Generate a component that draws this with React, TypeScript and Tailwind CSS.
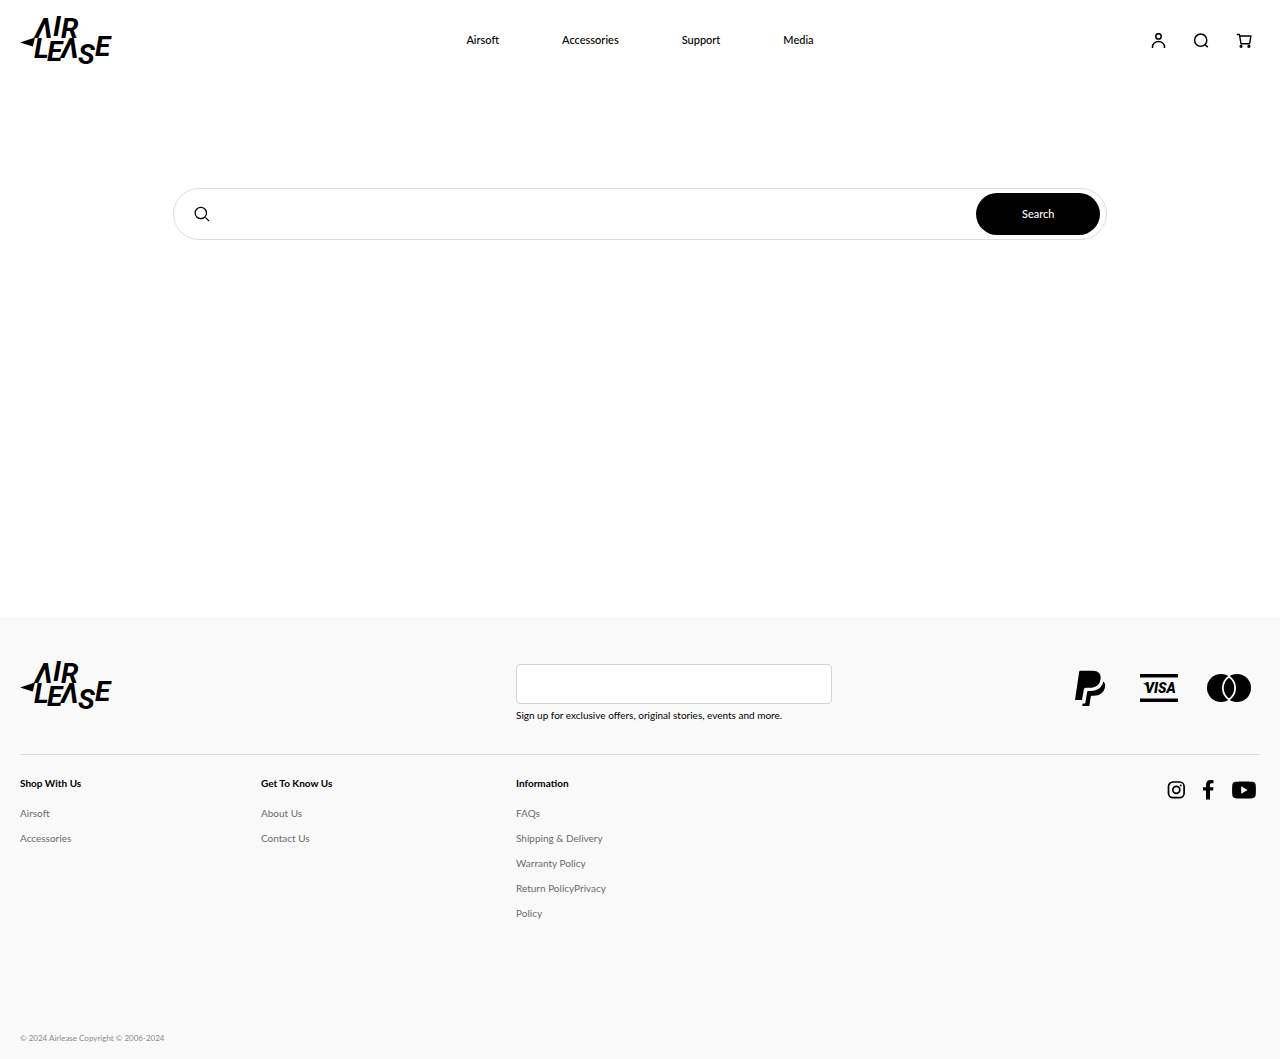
import React from "react";

const navLinks = ["Airsoft", "Accessories", "Support", "Media"];

const footerColumns = [
  { title: "Shop With Us", links: ["Airsoft", "Accessories"] },
  { title: "Get To Know Us", links: ["About Us", "Contact Us"] },
  {
    title: "Information",
    links: [
      "FAQs",
      "Shipping & Delivery",
      "Warranty Policy",
      "Return PolicyPrivacy",
      "Policy",
    ],
  },
];

function Logo() {
  return (
    <a href="#" aria-label="Airlease" className="block w-24">
      <svg
        width="96"
        height="52"
        viewBox="0 0 96 52"
        className="block overflow-visible font-['Roboto',sans-serif] text-[28px] font-bold italic"
      >
        <path d="M0 27.500 15 22.500 12.800 31.500Z" />
        <text x="15 33 41 14 27 41 58 75" y="23 21 23 43 46 43 49 41">
          ΛIRLEΛSE
        </text>
      </svg>
    </a>
  );
}

function UserIcon() {
  return (
    <svg width="16" height="16" viewBox="0 0 16 16" fill="none" stroke="#000" strokeWidth="1.5">
      <circle cx="8.500" cy="3.400" r="2.700" />
      <path d="M2.500 15V14a6 5.600 0 0 1 12 0v1" />
    </svg>
  );
}

function SearchIcon() {
  return (
    <svg width="16" height="16" viewBox="0 0 16 16" fill="none" stroke="#000" strokeWidth="1.5">
      <circle cx="7.700" cy="7.200" r="6.100" />
      <path d="m12 11.500 2.800 2.800" />
    </svg>
  );
}

function CartIcon() {
  return (
    <svg width="16" height="16" viewBox="0 0 16 16" fill="none" stroke="#000" strokeWidth="1.4">
      <path d="M.800 1.500h2.600l1.600 9.200h8.600l1.300-7.700H3.700" />
      <circle cx="5" cy="13.300" r="0.900" />
      <circle cx="12.900" cy="13.300" r="0.900" />
    </svg>
  );
}

function PaypalIcon() {
  return (
    <svg width="32" height="36" viewBox="0 0 32 36">
      <path d="M5.200 .8H18c5 0 8.200 3 7.600 8.200-.8 6-5 8.800-11 8.800H11c-1.200 0-2 .7-2.200 1.900L7 30H0L4.200 1.800C4.300 1.200 4.700 .8 5.200 .8Z" />
      <path d="M28.300 11.500c2 1.600 2.200 3.600 1.600 6-1.200 5.400-5.200 8.200-11 8.200h-1.500c-1 0-1.500.5-1.700 1.400L14.400 36H7.200l.5-2.600h2.500l2-11.600c.1-.6.5-.9 1.100-.9h2.200c7.200 0 11.400-3.400 12.800-9.500Z" />
    </svg>
  );
}

function VisaIcon() {
  return (
    <svg width="38" height="28" viewBox="0 0 38 28">
      <path d="M0 0h38v3.600H0ZM0 24.400h38V28H0ZM3 9.200h4.500l1.500 4Z" />
      <text
        x="5"
        y="19"
        className="font-['Roboto',sans-serif] text-[14px] font-black italic"
      >
        VISA
      </text>
    </svg>
  );
}

function MastercardIcon() {
  return (
    <svg width="44" height="28" viewBox="0 0 44 28">
      <circle cx="14" cy="14" r="14" />
      <circle cx="30" cy="14" r="14" />
      <path
        d="M22 2.500c-8.200 6-8.200 17 0 23 8.200-6 8.200-17 0-23Z"
        stroke="#f9f9f9"
        strokeWidth="1.800"
      />
    </svg>
  );
}

function InstagramIcon() {
  return (
    <svg width="18" height="18" viewBox="0 0 18 18" fill="none" stroke="#000" strokeWidth="1.700">
      <rect x="1.500" y="1" width="15.600" height="15.600" rx="4.400" />
      <circle cx="9.300" cy="8.800" r="3.500" />
      <circle cx="13.700" cy="4.400" r="1" fill="#000" stroke="none" />
    </svg>
  );
}

function FacebookIcon() {
  return (
    <svg width="11" height="20" viewBox="0 0 11 20">
      <path d="M3 19.500v-9H0V7.300h3V5c0-3.200 1.800-5 4.800-5 1.300 0 2.300.1 2.700.2v3.100H8.600C7.200 3.300 7 4 7 5.100v2.200h3.500L10 10.500H7v9Z" />
    </svg>
  );
}

function YoutubeIcon() {
  return (
    <svg width="24" height="18" viewBox="0 0 24 18">
      <path
        fillRule="evenodd"
        d="M3.500.8C8 .4 16 .4 20.500.8c2 .2 3 1.400 3.200 3.200.3 3 .3 7 0 10-.2 1.800-1.200 3-3.200 3.200-4.500.4-12.500.4-17 0-2-.2-3-1.400-3.200-3.200C0 11 0 7 .3 4 .5 2.200 1.500 1 3.500.8ZM9.200 5.200v7.600L15.600 9Z"
      />
    </svg>
  );
}

export default function App() {
  return (
    <div className="flex min-h-screen flex-col bg-white font-['Lato','Noto_Sans',sans-serif] text-[11px] text-black">
      <header className="grid h-[81px] grid-cols-[1fr_auto_1fr] items-center px-5">
        <Logo />
        <nav className="flex gap-[63px] font-medium">
          {navLinks.map((link) => (
            <a key={link} href="#">
              {link}
            </a>
          ))}
        </nav>
        <div className="flex items-center justify-end gap-[27px] pr-2">
          <button type="button" aria-label="Account">
            <UserIcon />
          </button>
          <button type="button" aria-label="Search">
            <SearchIcon />
          </button>
          <button type="button" aria-label="Cart">
            <CartIcon />
          </button>
        </div>
      </header>

      <main className="flex-1 pt-[107px]">
        <form
          role="search"
          className="mx-auto flex w-[73%] items-center rounded-full border border-[#dedede] py-1 pr-[6px] pl-5"
        >
          <label htmlFor="query" aria-label="Search products">
            <svg width="16" height="16" viewBox="0 0 16 16" fill="none" stroke="#000" strokeWidth="1.200">
              <circle cx="6.800" cy="7" r="5.700" />
              <path d="m11.400 11.400 3.600 3.600" />
            </svg>
          </label>
          <input id="query" type="text" className="min-w-0 flex-1 px-3 text-sm outline-none" />
          <button
            type="button"
            className="h-[42px] w-[124px] rounded-full bg-black font-medium text-white"
          >
            Search
          </button>
        </form>
      </main>

      <footer className="bg-[#f9f9f9] px-5 pt-[43px] pb-[13px] text-[10px]">
        <div className="grid grid-cols-[496fr_744fr] border-b border-[#dcdcdc] pb-[31px]">
          <Logo />
          <div className="flex items-start justify-between">
            <div className="pt-1">
              <input
                id="email"
                type="email"
                className="block h-10 w-[316px] rounded border border-[#d5d5d5] bg-white px-3"
              />
              <label htmlFor="email" className="mt-[3px] block leading-4">
                Sign up for exclusive offers, original stories, events and more.
              </label>
            </div>
            <div className="flex h-14 items-center gap-[29px] pr-[9px]">
              <div className="mr-1">
                <PaypalIcon />
              </div>
              <VisaIcon />
              <MastercardIcon />
            </div>
          </div>
        </div>

        <div className="grid grid-cols-[241fr_255fr_648fr_96fr] pt-5">
          {footerColumns.map((column) => (
            <section key={column.title}>
              <h2 className="leading-4 font-bold">{column.title}</h2>
              <ul className="mt-[14px] flex flex-col gap-[9px] leading-4 text-[#6b6b6b]">
                {column.links.map((link) => (
                  <li key={link}>
                    <a href="#">{link}</a>
                  </li>
                ))}
              </ul>
            </section>
          ))}
          <div className="flex items-center justify-end gap-[18px] self-start pt-[5px] pr-1">
            <a href="#" aria-label="Instagram">
              <InstagramIcon />
            </a>
            <a href="#" aria-label="Facebook">
              <FacebookIcon />
            </a>
            <a href="#" aria-label="YouTube">
              <YoutubeIcon />
            </a>
          </div>
        </div>

        <p className="mt-[109px] text-[8px] leading-4 text-[#8c8c8c]">
          © 2024 Airlease Copyright © 2006-2024
        </p>
      </footer>
    </div>
  );
}
